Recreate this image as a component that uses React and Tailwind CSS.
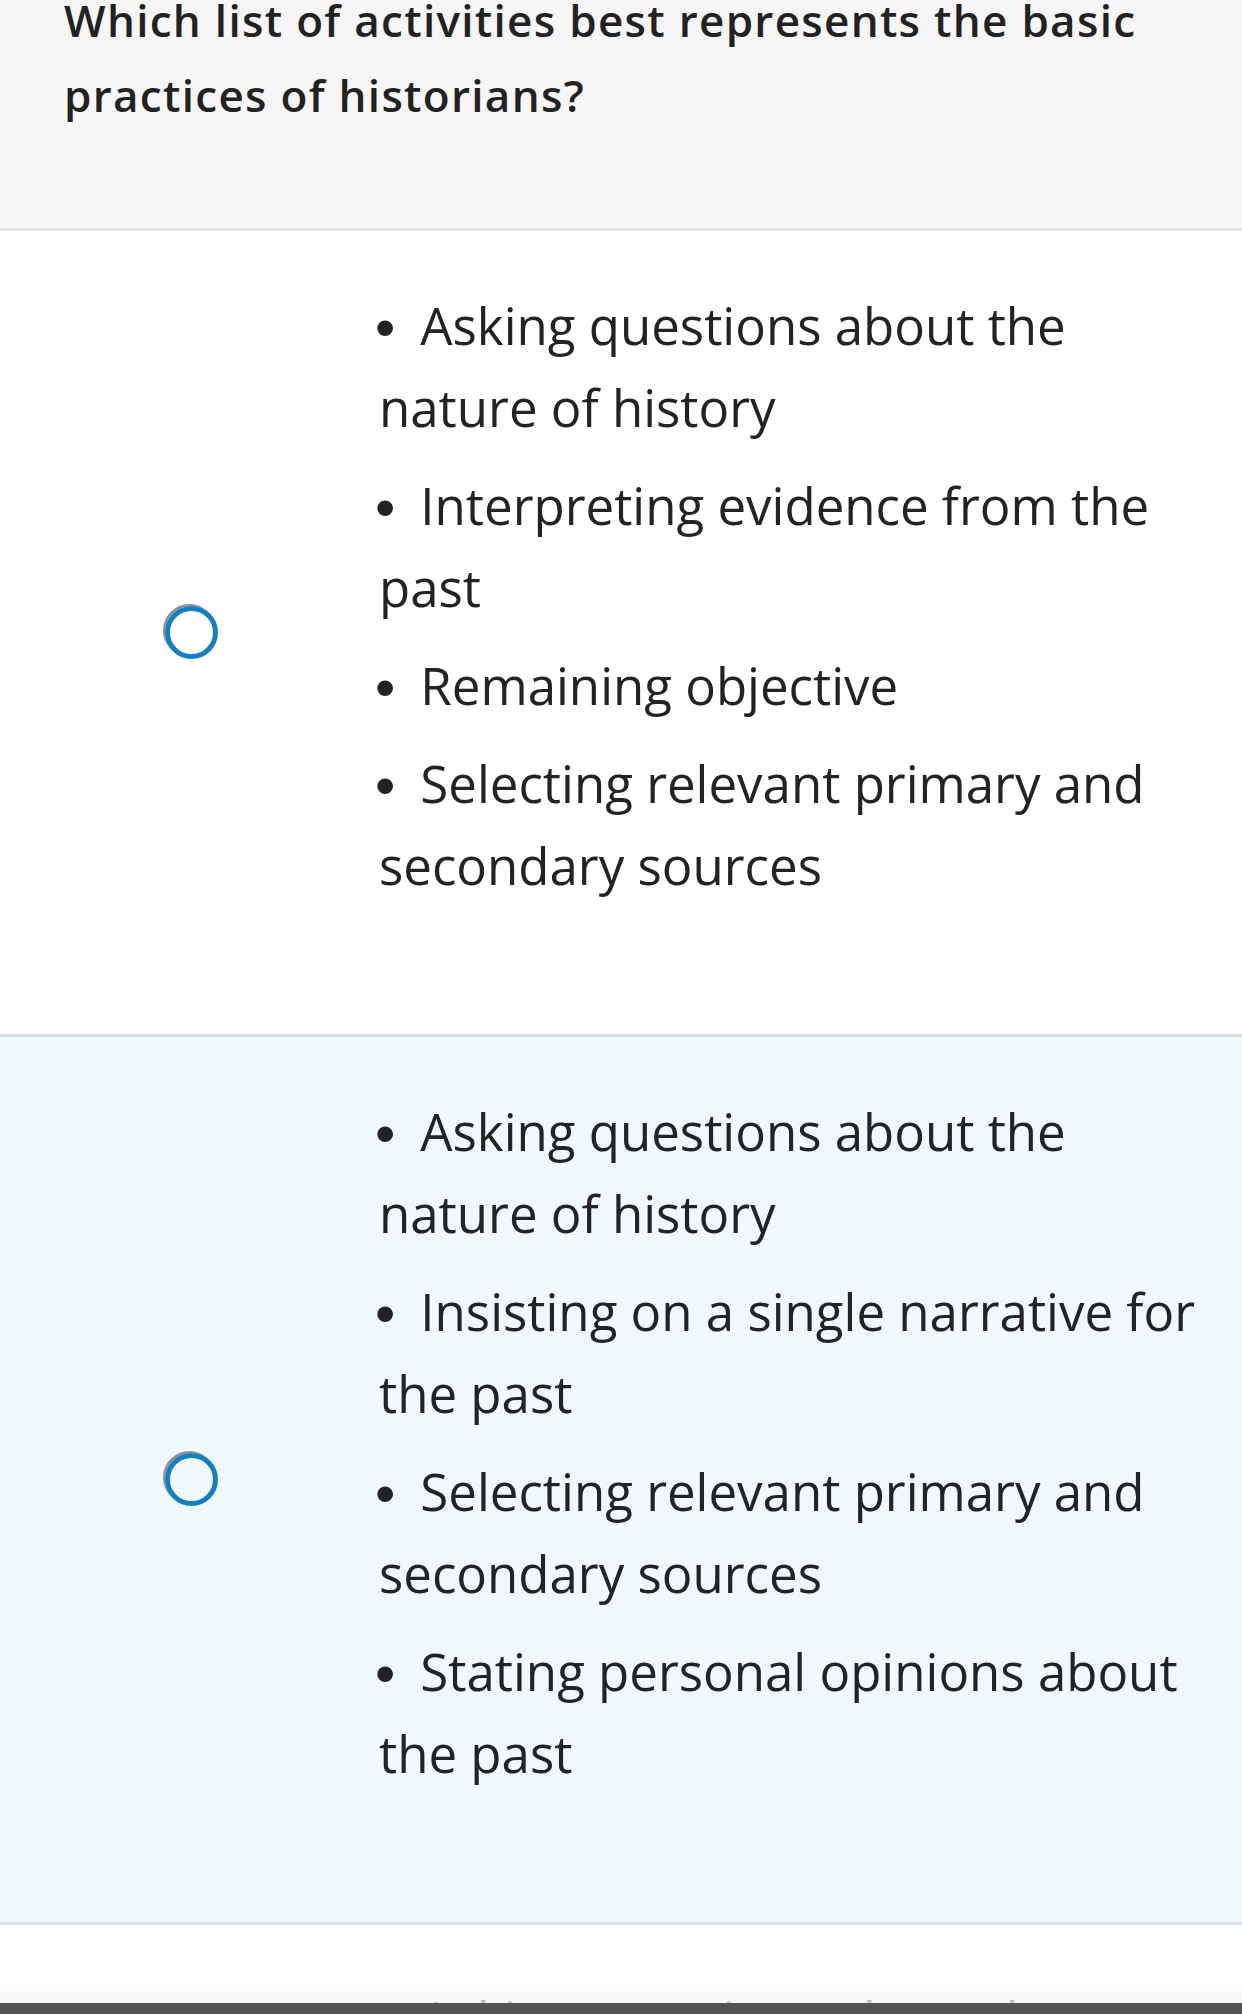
import React from 'react';

const options = [
  {
    bg: 'bg-white',
    items: [
      'Asking questions about the nature of history',
      'Interpreting evidence from the past',
      'Remaining objective',
      'Selecting relevant primary and secondary sources',
    ],
  },
  {
    bg: 'bg-[#f0f8fc]',
    items: [
      'Asking questions about the nature of history',
      'Insisting on a single narrative for the past',
      'Selecting relevant primary and secondary sources',
      'Stating personal opinions about the past',
    ],
  },
  {
    bg: 'bg-white',
    items: [
      'Asking questions about the nature of history',
      'Interpreting evidence from the past',
      'Selecting relevant primary and secondary sources',
      'Stating personal opinions about the past',
    ],
  },
];

function Radio() {
  return (
    <div className="w-[53px] h-[53px] rounded-full border-[5px] border-[#1380c3] shadow-[-2px_-2px_0_#8e8e8e]" />
  );
}

function Option({ bg, items }) {
  return (
    <div className={`flex items-center border-b-[3px] border-[#dfe1e4] ${bg}`}>
      <div className="w-[379px] shrink-0 pl-[165px]">
        <Radio />
      </div>
      <ul className="flex-1 pr-[24px] pt-[53px] pb-[112px] text-[51px] leading-[82px] text-[#232323]">
        {items.map((t, i) => (
          <li key={i} className="mb-[16px]">
            <span className="inline-block leading-none text-[58px] align-[-2px] font-['Liberation_Sans',sans-serif] ml-[-4px] mr-[25px]">•</span>
            {t}
          </li>
        ))}
      </ul>
    </div>
  );
}

export default function App() {
  return (
    <div className="relative h-screen overflow-hidden bg-white font-['Open_Sans','Liberation_Sans',sans-serif]">
      {/* Question header */}
      <div className="bg-[#f6f6f6] border-b-[3px] border-[#dfe1e4] px-[64px] pb-[95px]">
        <h1 className="-mt-[17px] text-[44px] leading-[75px] font-semibold tracking-[1.3px] text-[#222222]">
          Which list of activities best represents the basic practices of historians?
        </h1>
      </div>

      {options.map((o, i) => (
        <Option key={i} {...o} />
      ))}

      {/* bottom toolbar edge */}
      <div className="absolute bottom-[11px] left-0 right-0 h-[22px] bg-gradient-to-b from-transparent to-[#f4f4f4]/80" />
      <div className="absolute bottom-0 left-0 right-0 h-[11px] bg-[#545454]" />
    </div>
  );
}
